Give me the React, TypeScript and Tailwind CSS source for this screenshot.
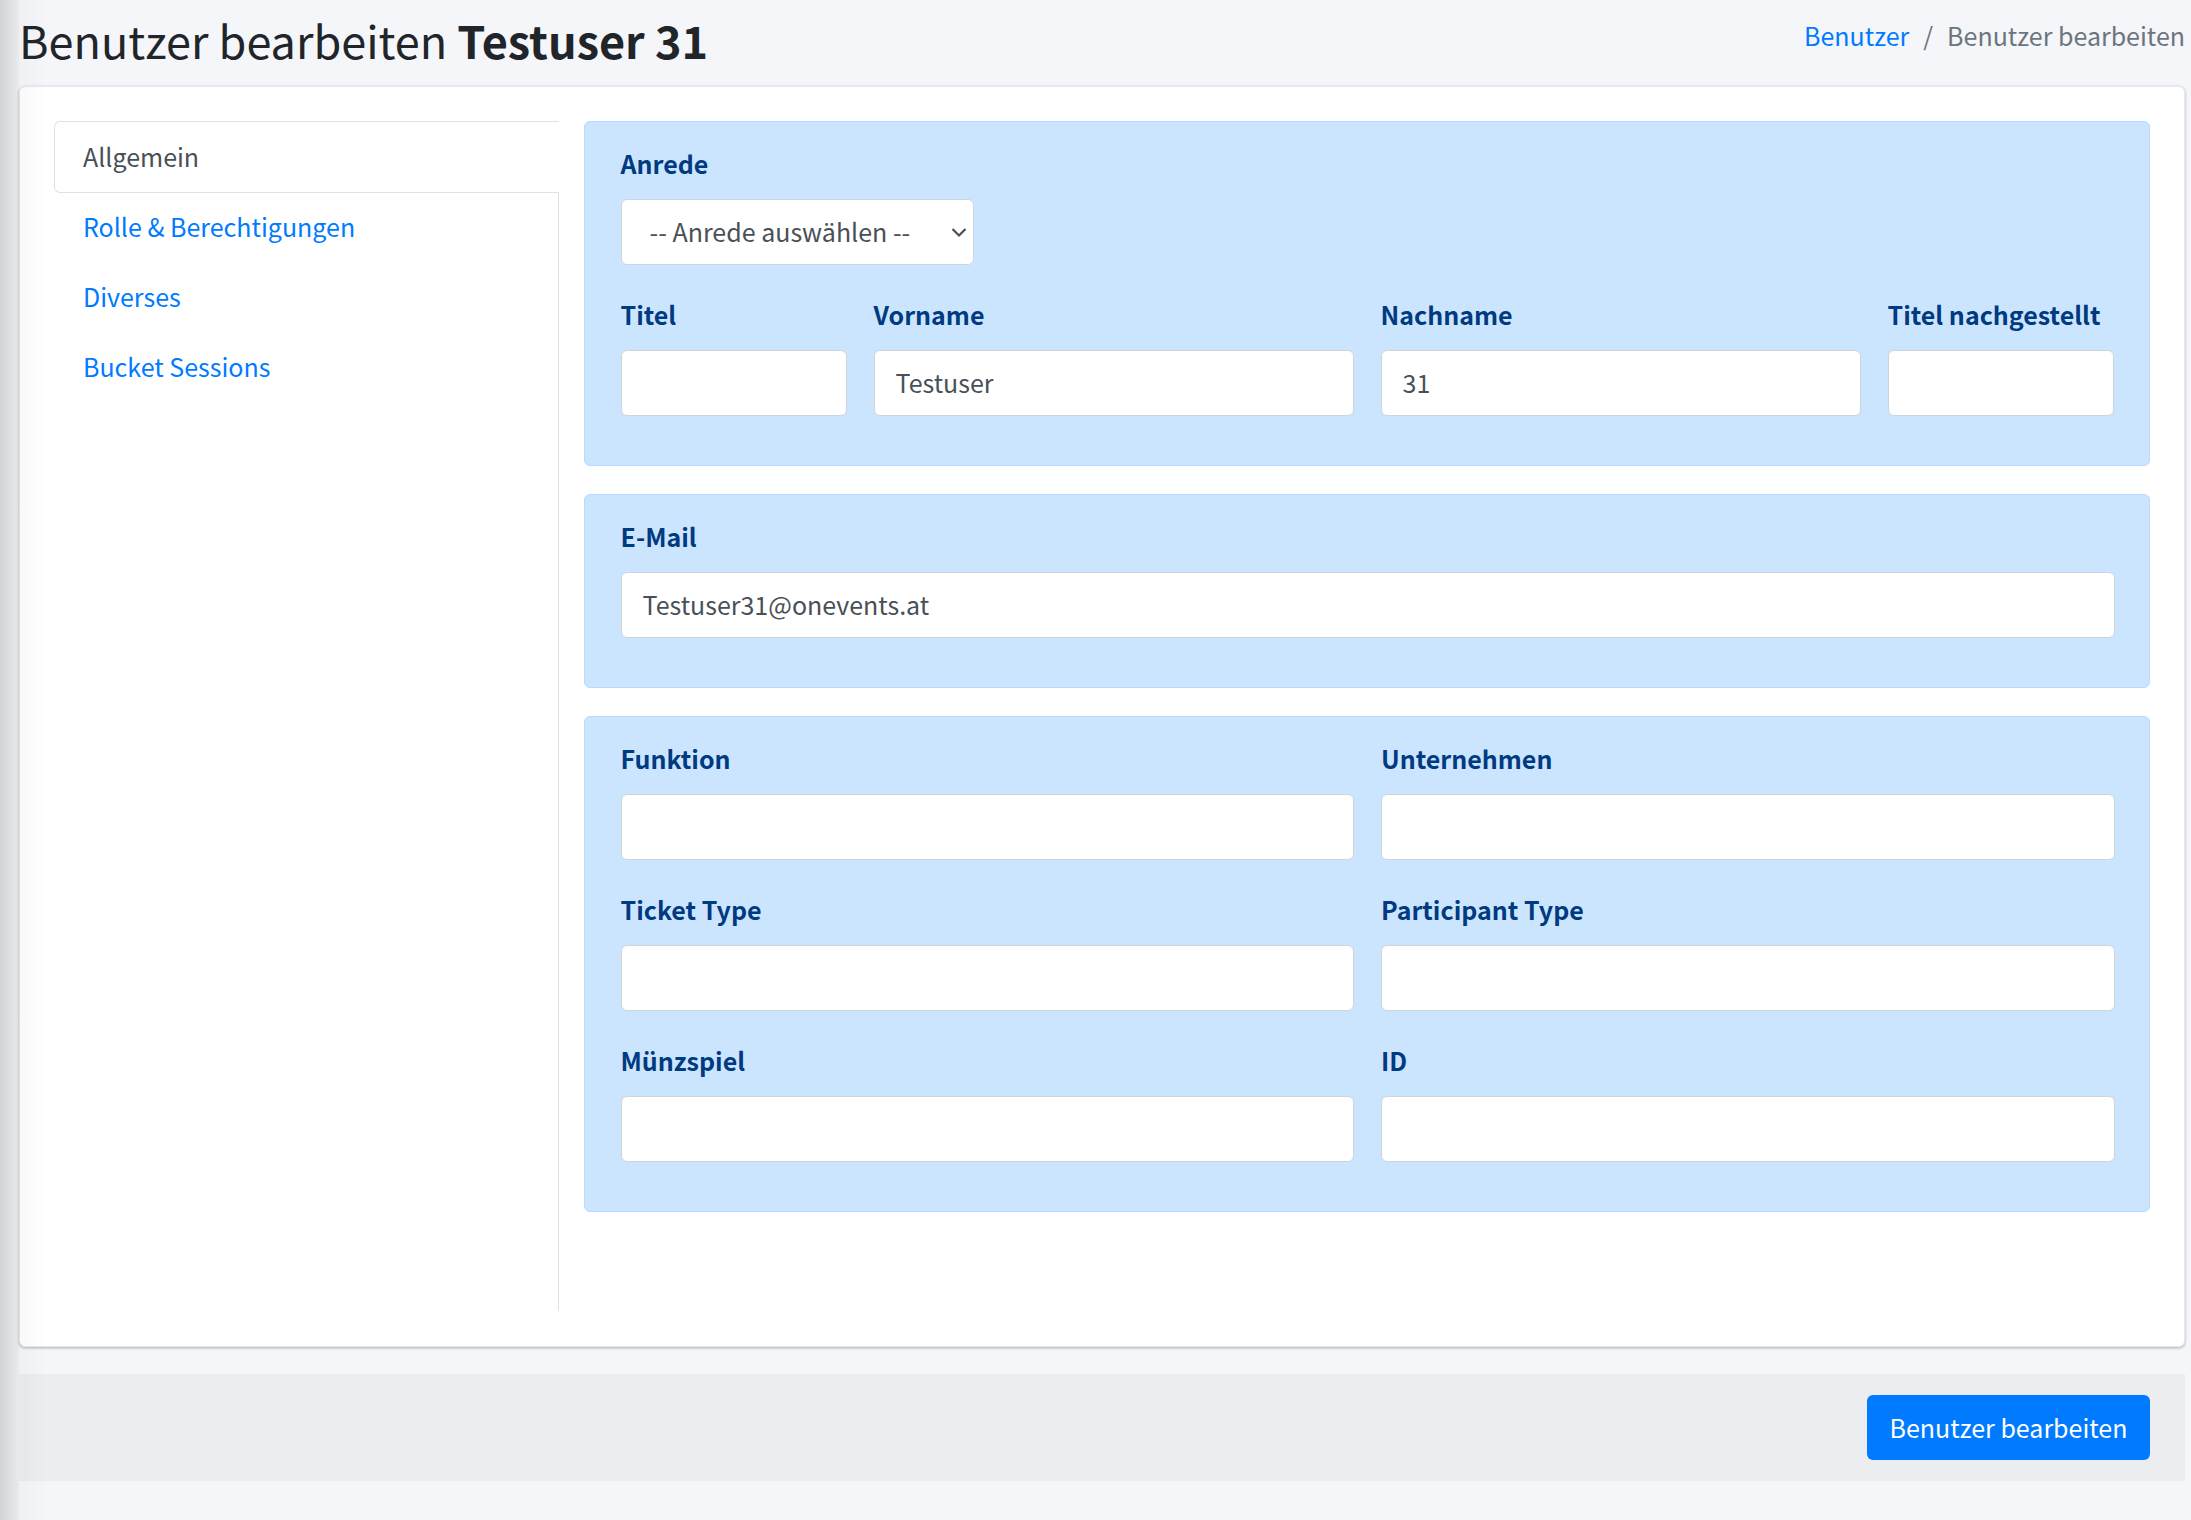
const font = "font-['Noto_Sans_CJK_SC',sans-serif]";

function Field({ label, value, className = "" }: { label: string; value?: string; className?: string }) {
  return (
    <div className={`flex flex-col ${className}`}>
      <label className="mb-[16px] h-[36px] whitespace-nowrap text-[25px] leading-[33px] font-bold text-[#003a80]">{label}</label>
      <div className="flex h-[66px] items-center rounded-[6px] border border-[#ced4da] bg-white px-[21px] pb-[2px] text-[25px] leading-[38px] text-[#495057]">
        {value}
      </div>
    </div>
  );
}

function Panel({ children }: { children: React.ReactNode }) {
  return (
    <section className="rounded-[6px] border border-[#b8daff] bg-[#cce5ff] pt-[25px] pr-[34.5px] pb-[49px] pl-[35.5px]">
      {children}
    </section>
  );
}

export default function App() {
  return (
    <div className={`${font} relative h-[1520px] w-[2191px] overflow-hidden bg-[#f4f6f9] pr-[6px] pl-[19px] text-[#212529]`}>
      <header className="relative flex h-[86px] items-start justify-between">
        <h1 className="mt-[10px] text-[45px] leading-[59px] font-normal">
          Benutzer bearbeiten <b className="font-bold">Testuser 31</b>
        </h1>
        <nav className="mt-[15px] flex text-[25px] leading-[40px]">
          <a className="text-[#007bff]">Benutzer</a>
          <span className="px-[14px] text-[#6c757d]">/</span>
          <span className="text-[#6c757d]">Benutzer bearbeiten</span>
        </nav>
      </header>

      <main className="relative flex h-[1261px] rounded-[6px] border border-[#e6e8ea] bg-white pt-[34px] pr-[34px] pl-[34px] shadow-[0_1px_3px_rgba(0,0,0,0.3)]">
        <aside className="flex h-[1190px] w-[505px] flex-col border-r border-[#dee2e6] text-[25px]">
          <a className="-mr-px flex h-[72px] items-center rounded-l-[6px] border border-r-0 border-[#dee2e6] bg-white pl-[28px] text-[#495057]">Allgemein</a>
          <a className="flex h-[70px] items-center pb-[2px] pl-[29px] text-[#007bff]">Rolle &amp; Berechtigungen</a>
          <a className="flex h-[70px] items-center pb-[2px] pl-[29px] text-[#007bff]">Diverses</a>
          <a className="flex h-[70px] items-center pb-[2px] pl-[29px] text-[#007bff]">Bucket Sessions</a>
        </aside>

        <div className="ml-[25px] flex flex-1 flex-col gap-[28px]">
          <Panel>
            <div className="flex flex-col items-start">
              <label className="mb-[16px] h-[36px] text-[25px] leading-[33px] font-bold text-[#003a80]">Anrede</label>
              <div className="flex h-[66px] w-[353px] items-center justify-between rounded-[6px] border border-[#ced4da] bg-white pr-[5px] pl-[28px] text-[25px] text-[#495057]">
                <span>-- Anrede auswählen --</span>
                <svg width="18" height="12" viewBox="0 0 18 12" fill="none" stroke="#4a4f55" strokeWidth="2.2">
                  <path d="M2.5 3 9 9.5 15.5 3" />
                </svg>
              </div>
            </div>
            <div className="mt-[33px] flex gap-[27px]">
              <Field label="Titel" className="w-[226px]" />
              <Field label="Vorname" value="Testuser" className="w-[480px]" />
              <Field label="Nachname" value="31" className="w-[480px]" />
              <Field label="Titel nachgestellt" className="w-[226px]" />
            </div>
          </Panel>

          <Panel>
            <Field label="E-Mail" value="Testuser31@onevents.at" />
          </Panel>

          <Panel>
            <div className="grid grid-cols-2 gap-x-[27px] gap-y-[33px]">
              <Field label="Funktion" />
              <Field label="Unternehmen" />
              <Field label="Ticket Type" />
              <Field label="Participant Type" />
              <Field label="Münzspiel" />
              <Field label="ID" />
            </div>
          </Panel>
        </div>
      </main>

      <footer className="relative mt-[27px] flex h-[107px] items-center justify-end bg-[#ebedf1] pr-[35px]">
        <button className="flex h-[65px] w-[283px] items-center justify-center rounded-[6px] bg-[#007bff] text-[25px] text-white">
          Benutzer bearbeiten
        </button>
      </footer>
      <div className="pointer-events-none absolute top-0 bottom-0 left-0 w-[19px] bg-gradient-to-r from-[#00000024] to-[#0000000c]" />
      <div className="pointer-events-none absolute top-0 bottom-0 left-[19px] w-[30px] bg-gradient-to-r from-[#00000006] to-transparent" />
    </div>
  );
}
